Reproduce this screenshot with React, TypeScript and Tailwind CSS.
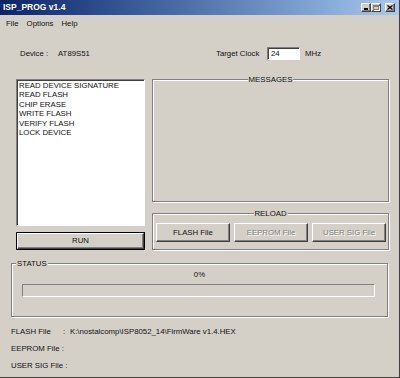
const raised =
  "border border-t-white border-l-white border-b-[#404040] border-r-[#404040] shadow-[inset_-1px_-1px_0_#808080]";
const sunken =
  "border border-t-[#808080] border-l-[#808080] border-b-white border-r-white shadow-[inset_1px_1px_0_#404040]";
const etched = "border border-[#808080] shadow-[inset_1px_1px_0_#fff,1px_1px_0_#fff]";

const commands = [
  "READ DEVICE SIGNATURE",
  "READ FLASH",
  "CHIP ERASE",
  "WRITE FLASH",
  "VERIFY FLASH",
  "LOCK DEVICE",
];

function CaptionButton({ kind }: { kind: "min" | "max" | "close" }) {
  return (
    <div className={`relative flex h-[9px] w-[10px] items-center justify-center bg-[#d4d0c8] ${raised}`}>
      {kind === "min" && <div className="absolute bottom-[1px] left-[2px] h-[2px] w-[4px] bg-black" />}
      {kind === "max" && (
        <div className="h-[5px] w-[6px] border border-t-2 border-[#808080] shadow-[1px_1px_0_#fff]" />
      )}
      {kind === "close" && (
        <svg width="6" height="5" viewBox="0 0 6 5">
          <path d="M0.5 0.5 L5.5 4.5 M5.5 0.5 L0.5 4.5" stroke="#000" strokeWidth="1.3" />
        </svg>
      )}
    </div>
  );
}

function Group({ label, center, className, children }: { label: string; center?: boolean; className: string; children?: React.ReactNode }) {
  return (
    <div className={`relative ${etched} ${className}`}>
      <span
        className={`absolute top-[-5px] bg-[#d4d0c8] px-[1px] leading-[9px] ${
          center ? "left-1/2 -translate-x-1/2" : "left-[4px]"
        }`}
      >
        {label}
      </span>
      {children}
    </div>
  );
}

function PushButton({ label, disabled }: { label: string; disabled?: boolean }) {
  return (
    <div
      className={`flex h-[19px] w-[74px] items-center justify-center bg-[#d4d0c8] ${raised} ${
        disabled ? "text-[#808080] [text-shadow:1px_1px_0_#fff]" : "text-[#111]"
      }`}
    >
      {label}
    </div>
  );
}

export default function App() {
  return (
    <div className="flex h-[378px] w-[400px] flex-col overflow-hidden border-b border-r border-b-[#404040] border-r-[#404040] bg-[#d4d0c8] font-['Liberation_Sans',Arial,sans-serif] text-[7.8px] text-[#111]">
      <div className="flex h-[15px] shrink-0 items-center justify-between bg-linear-to-r from-[#0a246a] to-[#a6caf0] pl-[3px] pr-[4px]">
        <span className="text-[8.5px] font-bold text-white">ISP_PROG v1.4</span>
        <div className="flex items-center">
          <CaptionButton kind="min" />
          <CaptionButton kind="max" />
          <div className="w-[4px]" />
          <CaptionButton kind="close" />
        </div>
      </div>

      <div className="flex h-[17px] items-center gap-[8px] pl-[6px]">
        <span>File</span>
        <span>Options</span>
        <span>Help</span>
      </div>

      <div className="mt-[15px] flex h-[13px] items-center pl-[20px]">
        <span className="w-[38px]">Device :</span>
        <span className="w-[158px]">AT89S51</span>
        <span className="w-[51px]">Target Clock</span>
        <div className={`flex h-[13px] w-[33px] items-center bg-white pl-[3px] ${sunken}`}>24</div>
        <span className="ml-[5px]">MHz</span>
      </div>

      <div className="mt-[19px] flex gap-[7px] pl-[16px]">
        <div className="flex w-[129px] flex-col">
          <div className={`h-[147px] bg-white pl-[2px] pt-[1px] leading-[9.4px] ${sunken}`}>
            {commands.map((c) => (
              <div key={c}>{c}</div>
            ))}
          </div>
          <div className="mt-[6px] h-[18px] border border-black">
            <div className={`flex h-full items-center justify-center ${raised}`}>RUN</div>
          </div>
        </div>

        <div className="flex w-[237px] flex-col">
          <Group label="MESSAGES" center className="h-[123px]" />
          <Group label="RELOAD" center className="mt-[11px] flex h-[37px] gap-[4px] pl-[3px] pt-[9px]">
            <PushButton label="FLASH File" />
            <PushButton label="EEPROM File" disabled />
            <PushButton label="USER SIG  File" disabled />
          </Group>
        </div>
      </div>

      <Group label="STATUS" className="ml-[11px] mt-[13px] h-[54px] w-[377px] shrink-0">
        <div className="mt-[6px] text-center leading-[9px]">0%</div>
        <div className="ml-[10px] mt-[5px] h-[13px] w-[353px] border border-t-[#808080] border-l-[#808080] border-b-white border-r-white" />
      </Group>

      <div className="ml-[11px] mt-[6px] flex h-[17px] items-center">
        <span className="w-[52px]">FLASH File</span>
        <span className="w-[7px]">:</span>
        <span>K:\nostalcomp\ISP8052_14\FirmWare v1.4.HEX</span>
      </div>
      <div className="ml-[11px] flex h-[17px] items-center">EEPROM File :</div>
      <div className="ml-[11px] flex h-[17px] items-center">USER SIG File :</div>
    </div>
  );
}
